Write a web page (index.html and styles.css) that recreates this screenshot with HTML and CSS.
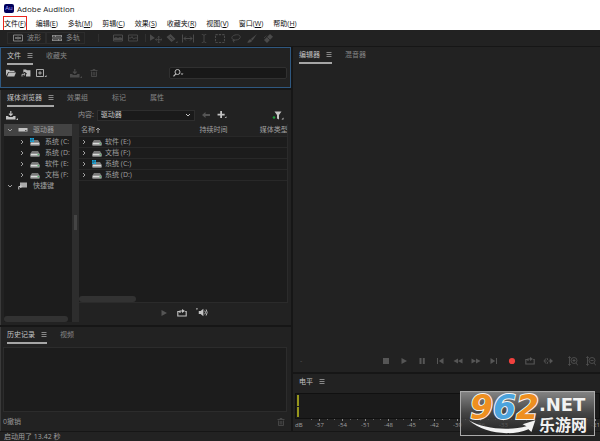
FILE: index.html
```html
<!DOCTYPE html>
<html lang="zh-CN">
<head>
<meta charset="utf-8">
<meta name="viewport" content="width=device-width, initial-scale=1">
<title>Adobe Audition</title>
<link rel="stylesheet" href="styles.css">
</head>
<body>
<svg class="sprite" aria-hidden="true">
  <symbol id="wave" viewBox="0 0 10 8"><path d="M.5 1h9v6h-9zM2 4h6M3 3v2M5 2.500v3M7 3v2" fill="none" stroke="currentColor" stroke-width=".9"/></symbol>
  <symbol id="multi" viewBox="0 0 10 8"><path d="M0 1h10v2.600H0zM0 4.400h10V7H0z" fill="currentColor"/><path d="M1 2.300h2M4 2.300h5M1 5.700h5M7 5.700h2" stroke="#222" stroke-width=".7"/></symbol>
  <symbol id="freq" viewBox="0 0 10 8"><path d="M.5 1h9v6h-9z" fill="none" stroke="currentColor"/><path d="M1 6V4l2-1 2 1 2-1 2 1v2z" fill="currentColor"/></symbol>
  <symbol id="pitch" viewBox="0 0 10 8"><path d="M.5 1h9v6h-9zM1 4h2l1-1.500L5.500 5 7 4h2" fill="none" stroke="currentColor" stroke-width=".9"/></symbol>
  <symbol id="move" viewBox="0 0 11 8"><path d="M0 0l4.500 3.500L0 6z" fill="currentColor"/><path d="M5 5h6M8 2v6M6 4L5 5l1 1M10 4l1 1-1 1M7 3l1-1 1 1M7 7l1 1 1-1" fill="none" stroke="currentColor" stroke-width=".8"/></symbol>
  <symbol id="razor" viewBox="0 0 11 9"><path d="M0 3l4-3 5 5-4 3z" fill="currentColor"/><path d="M3.500 2.800l2.800 2.800" stroke="#222" stroke-width=".8"/><path d="M11 7v2H9z" fill="currentColor"/></symbol>
  <symbol id="slip" viewBox="0 0 12 8"><path d="M.5 0v8M11.500 0v8M2 4h8M4 2L2 4l2 2M8 2l2 2-2 2" fill="none" stroke="currentColor"/></symbol>
  <symbol id="beam" viewBox="0 0 6 8"><path d="M1 .5h1l1 .7 1-.7h1M3 1v6M1 7.500h1l1-.7 1 .7h1" fill="none" stroke="currentColor" stroke-width=".8"/></symbol>
  <symbol id="marquee" viewBox="0 0 10 8"><path d="M1 .5h8v7H1z" fill="none" stroke="currentColor" stroke-dasharray="2 1"/></symbol>
  <symbol id="lasso" viewBox="0 0 10 9"><path d="M3 6C0 5 0 2 4 1s6 1 5 3-4 2-6 2c-2-1-1 2 1 0M2 6l1 2.500" fill="none" stroke="currentColor" stroke-width=".9"/></symbol>
  <symbol id="brush" viewBox="0 0 10 9"><path d="M10 0L5.500 6.500 3.800 5zM3.300 5.200l1.800 1.600C4 8.700 2 9 0 8.600c1.200-.8 1.500-3 3.300-3.400z" fill="currentColor"/></symbol>
  <symbol id="heal" viewBox="0 0 10 9"><path d="M7 0l3 2.700L4 9 1 6z" fill="currentColor"/><path d="M4.200 3.200L7 6" stroke="#222" stroke-width=".7"/><path d="M1 4l3-3" stroke="currentColor" stroke-dasharray="1"/></symbol>
  <symbol id="folder" viewBox="0 0 10 8"><path d="M0 7V.7h3l1 1h4.500V3H2.300z" fill="currentColor"/><path d="M2.800 3.600H10L8.300 7.500H1z" fill="currentColor"/></symbol>
  <symbol id="import" viewBox="0 0 10 9"><path d="M2 .5h3l1 1h4V8.500H5V6.500l1-1.500-2.500-2L2 4z" fill="currentColor"/><path d="M.5 8.500V6h3M2.500 4.500L4 6 2.500 7.500" fill="none" stroke="currentColor"/></symbol>
  <symbol id="newfile" viewBox="0 0 11 8"><path d="M.5.5h7v7h-7zM2.200 4h3.600M4 2.200v3.600" fill="none" stroke="currentColor" stroke-width=".9"/><path d="M10.500 6v2h-2z" fill="currentColor"/></symbol>
  <symbol id="insert" viewBox="0 0 12 9"><path d="M0 5h2l1 1h3.500l1-1h2v3.500H0z" fill="currentColor"/><path d="M4.800 0v3.500M3 2.700l1.800 1.800 1.800-1.800" fill="none" stroke="currentColor" stroke-width="1.200"/><path d="M12 7v2h-2z" fill="currentColor"/></symbol>
  <symbol id="trash" viewBox="0 0 7 8"><path d="M0 1.500h7M2.500 1V.5h2V1M1 2.500v5h5v-5M2.700 3v3.500M4.300 3v3.500" fill="none" stroke="currentColor" stroke-width=".9"/></symbol>
  <symbol id="search" viewBox="0 0 11 8"><circle cx="4.500" cy="3" r="2.500" fill="none" stroke="currentColor"/><path d="M2.800 4.800L.5 7.300" stroke="currentColor" stroke-width="1.200"/><path d="M7.500 4.500h3L9 6z" fill="currentColor"/></symbol>
  <symbol id="back" viewBox="0 0 8 6"><path d="M0 3l3.500-3v2H8v2H3.500v2z" fill="currentColor"/></symbol>
  <symbol id="plus" viewBox="0 0 10 9"><path d="M3 0h2v3h3v2H5v3H3V5H0V3h3zM10 6v2H8z" fill="currentColor"/></symbol>
  <symbol id="filter" viewBox="0 0 11 9"><path d="M2 .5h7L6.500 4v4.500l-2-1V4z" fill="currentColor"/><circle cx="1.500" cy="6.500" r="1.300" fill="#1d9b3a"/><path d="M11 6.500v2H9z" fill="currentColor"/></symbol>
  <symbol id="chevron" viewBox="0 0 6 6"><path d="M1 2l2 2 2-2" fill="none" stroke="currentColor"/></symbol>
  <symbol id="right" viewBox="0 0 6 6"><path d="M2 1l2 2-2 2" fill="none" stroke="currentColor"/></symbol>
  <symbol id="up" viewBox="0 0 5 6"><path d="M2.500 6V1M.5 3l2-2 2 2" fill="none" stroke="currentColor"/></symbol>
  <symbol id="disk" viewBox="0 0 10 8"><path d="M2 2h6l1.500 2.500h-9z" fill="#777"/><path d="M.5 4.500h9v3h-9z" fill="#dcdcdc"/><path d="M1 6.800h8" stroke="#555" stroke-width=".6"/><path d="M7.500 5.700H9" stroke="#2fa44a"/></symbol>
  <symbol id="sysdisk" viewBox="0 0 10 8"><path d="M2 2h6l1.500 2.500h-9z" fill="#777"/><path d="M.5 4.500h9v3h-9z" fill="#dcdcdc"/><path d="M1 6.800h8" stroke="#555" stroke-width=".6"/><path d="M0 0h1.800v1.800H0zM2.200 0H4v1.800H2.200zM0 2.200h1.800V4H0zM2.200 2.200H4V4H2.200z" fill="#16a5dc"/></symbol>
  <symbol id="drive" viewBox="0 0 10 6"><path d="M.5 1h9v3.500h-9z" fill="#c4c4c4"/><path d="M7 3.500h1.500" stroke="#555"/></symbol>
  <symbol id="shortcut" viewBox="0 0 10 8"><path d="M2 .5h7v5H2z" fill="#aaa"/><path d="M.8 7.500V4.500h2.500M2.300 3l1.500 1.500L2.300 6" fill="none" stroke="#ccc"/></symbol>
  <symbol id="play" viewBox="0 0 8 8"><path d="M1.500 1l5.500 3-5.500 3z" fill="currentColor"/></symbol>
  <symbol id="stop" viewBox="0 0 8 8"><path d="M1 1h6v6H1z" fill="currentColor"/></symbol>
  <symbol id="pause" viewBox="0 0 8 8"><path d="M1.500 1h2v6h-2zM4.800 1h2v6h-2z" fill="currentColor"/></symbol>
  <symbol id="first" viewBox="0 0 8 8"><path d="M1 1h1v6H1zM7.500 1v6L2.800 4z" fill="currentColor"/></symbol>
  <symbol id="last" viewBox="0 0 8 8"><path d="M6 1h1v6H6zM.5 1v6l4.700-3z" fill="currentColor"/></symbol>
  <symbol id="rew" viewBox="0 0 10 8"><path d="M5 1.500v5L.5 4zM9.500 1.500v5L5 4z" fill="currentColor"/></symbol>
  <symbol id="ffw" viewBox="0 0 10 8"><path d="M.5 1.500v5L5 4zM5 1.500v5L9.500 4z" fill="currentColor"/></symbol>
  <symbol id="rec" viewBox="0 0 8 8"><circle cx="4" cy="4" r="3.100" fill="#f0413e"/></symbol>
  <symbol id="loop" viewBox="0 0 10 8"><path d="M2.500 2.500H.8V7h8.400V2.500H8.200M3 4V2h3" fill="none" stroke="currentColor" stroke-width="1.100"/><path d="M5 0l3 2-3 2z" fill="currentColor"/></symbol>
  <symbol id="skip" viewBox="0 0 11 8"><path d="M3.500 1L1 4l2.500 3M2 4h2M5 1v2M5 5v2M6 4h3" fill="none" stroke="currentColor"/><path d="M7.500 1L11 4 7.500 7z" fill="currentColor"/></symbol>
  <symbol id="speaker" viewBox="0 0 13 9"><path d="M3 3h2l3-2.500v8L5 6H3z" fill="currentColor"/><path d="M9.500 2.500q1.500 2 0 4M11 1.200q2.200 3.300 0 6.600" fill="none" stroke="currentColor"/><path d="M0 0h2L1 2z" fill="currentColor"/></symbol>
  <symbol id="zin" viewBox="0 0 10 10"><path d="M1.500 1v8M.3 2l1.200-1.500L2.700 2M.3 8l1.200 1.500L2.700 8M8 7l2 2.500M4.500 4.500h3M6 3v3" fill="none" stroke="currentColor" stroke-width=".8"/><circle cx="6" cy="4.500" r="3" fill="none" stroke="currentColor" stroke-width=".8"/></symbol>
  <symbol id="zout" viewBox="0 0 10 10"><path d="M1.500 1v8M.3 2l1.200-1.500L2.700 2M.3 8l1.200 1.500L2.700 8M8 7l2 2.500M4.500 4.500h3" fill="none" stroke="currentColor" stroke-width=".8"/><circle cx="6" cy="4.500" r="3" fill="none" stroke="currentColor" stroke-width=".8"/></symbol>
  <symbol id="list" viewBox="0 0 6 6"><path d="M.5.5h5M.5 2.500h5M.5 4.500h5" stroke="currentColor"/></symbol>
</svg>

<div class="app">
  <header class="titlebar"><span class="logo">Au</span><h1>Adobe Audition</h1></header>
  <nav class="menubar" aria-label="菜单">
    <button class="marked">文件(<u>F</u>)</button><button>编辑(<u>E</u>)</button><button>多轨(<u>M</u>)</button><button>剪辑(<u>C</u>)</button><button>效果(<u>S</u>)</button><button>收藏夹(<u>R</u>)</button><button>视图(<u>V</u>)</button><button>窗口(<u>W</u>)</button><button>帮助(<u>H</u>)</button>
  </nav>
  <div class="toolbar">
    <button class="mode"><svg class="i10"><use href="#wave"/></svg>波形</button>
    <button class="mode"><svg class="i10"><use href="#multi"/></svg>多轨</button>
    <div class="views">
      <button aria-label="频谱"><svg class="i10"><use href="#freq"/></svg></button>
      <button aria-label="音高"><svg class="i10"><use href="#pitch"/></svg></button>
    </div>
    <div class="tools">
      <button aria-label="移动"><svg class="i12"><use href="#move"/></svg></button>
      <button aria-label="切割"><svg class="i12"><use href="#razor"/></svg></button>
      <button aria-label="滑动"><svg class="i12"><use href="#slip"/></svg></button>
      <button aria-label="时间选择"><svg class="i12"><use href="#beam"/></svg></button>
      <button aria-label="框选"><svg class="i12"><use href="#marquee"/></svg></button>
      <button aria-label="套索"><svg class="i12"><use href="#lasso"/></svg></button>
      <button aria-label="画笔"><svg class="i12"><use href="#brush"/></svg></button>
      <button aria-label="修复"><svg class="i12"><use href="#heal"/></svg></button>
    </div>
  </div>

  <main class="workspace">
    <div class="column">
      <section class="panel files">
        <div class="tabs"><button class="tab active">文件<svg class="i6"><use href="#list"/></svg></button><button class="tab">收藏夹</button></div>
        <div class="filebar">
          <button aria-label="打开"><svg class="i10"><use href="#folder"/></svg></button>
          <button aria-label="导入"><svg class="i10"><use href="#import"/></svg></button>
          <button aria-label="新建"><svg class="i11"><use href="#newfile"/></svg></button>
          <div class="pair">
            <button aria-label="插入" disabled><svg class="i12"><use href="#insert"/></svg></button>
            <button aria-label="删除" disabled><svg class="i8"><use href="#trash"/></svg></button>
          </div>
          <label class="search"><svg class="i11"><use href="#search"/></svg><input type="search" aria-label="搜索"></label>
        </div>
      </section>

      <section class="panel browser">
        <div class="tabs wide"><button class="tab active">媒体浏览器<svg class="i6"><use href="#list"/></svg></button><button class="tab">效果组</button><button class="tab">标记</button><button class="tab">属性</button></div>
        <div class="browsebar">
          <button aria-label="导入文件"><svg class="i12"><use href="#insert"/></svg></button>
          <label class="content" for="source">内容:</label>
          <span class="picker"><select id="source"><option>驱动器</option></select><svg class="i6"><use href="#chevron"/></svg></span>
          <button class="dim" aria-label="后退"><svg class="i8"><use href="#back"/></svg></button>
          <button class="add" aria-label="添加"><svg class="i10"><use href="#plus"/></svg></button>
          <button class="filter" aria-label="筛选"><svg class="i12"><use href="#filter"/></svg></button>
        </div>
        <div class="split">
          <div class="tree">
            <ul>
              <li class="root selected"><svg class="i6"><use href="#chevron"/></svg><svg class="i10"><use href="#drive"/></svg>驱动器</li>
              <li><svg class="i6"><use href="#right"/></svg><svg class="i10"><use href="#sysdisk"/></svg>系统 (C:</li>
              <li><svg class="i6"><use href="#right"/></svg><svg class="i10"><use href="#disk"/></svg>系统 (D:</li>
              <li><svg class="i6"><use href="#right"/></svg><svg class="i10"><use href="#disk"/></svg>软件 (E:</li>
              <li><svg class="i6"><use href="#right"/></svg><svg class="i10"><use href="#disk"/></svg>文档 (F:</li>
              <li class="root"><svg class="i6"><use href="#chevron"/></svg><svg class="i10"><use href="#shortcut"/></svg>快捷键</li>
            </ul>
            <div class="thumb"></div>
          </div>
          <div class="divider"><span></span></div>
          <div class="listing">
            <div class="listbody">
              <table>
                <thead><tr><th class="name">名称<svg class="i6"><use href="#up"/></svg></th><th class="time">持续时间</th><th>媒体类型</th></tr></thead>
                <tbody>
                  <tr><td colspan="3"><div class="entry"><svg class="i6"><use href="#right"/></svg><svg class="i10"><use href="#disk"/></svg>软件 (E:)</div></td></tr>
                  <tr><td colspan="3"><div class="entry"><svg class="i6"><use href="#right"/></svg><svg class="i10"><use href="#disk"/></svg>文档 (F:)</div></td></tr>
                  <tr><td colspan="3"><div class="entry"><svg class="i6"><use href="#right"/></svg><svg class="i10"><use href="#sysdisk"/></svg>系统 (C:)</div></td></tr>
                  <tr><td colspan="3"><div class="entry"><svg class="i6"><use href="#right"/></svg><svg class="i10"><use href="#disk"/></svg>系统 (D:)</div></td></tr>
                </tbody>
              </table>
              <div class="thumb"></div>
            </div>
            <div class="preview">
              <button class="dim" aria-label="播放"><svg class="i8"><use href="#play"/></svg></button>
              <button aria-label="循环"><svg class="i10"><use href="#loop"/></svg></button>
              <button aria-label="自动播放"><svg class="i12"><use href="#speaker"/></svg></button>
            </div>
          </div>
        </div>
      </section>

      <section class="panel history">
        <div class="tabs"><button class="tab active">历史记录<svg class="i6"><use href="#list"/></svg></button><button class="tab">视频</button></div>
        <div class="log"></div>
        <div class="undo"><span>0撤销</span><button aria-label="删除记录" disabled><svg class="i8"><use href="#trash"/></svg></button></div>
      </section>
    </div>

    <div class="column">
      <section class="panel editor">
        <div class="tabs"><button class="tab active">编辑器<svg class="i6"><use href="#list"/></svg></button><button class="tab">混音器</button></div>
        <div class="transport">
          <span class="clock">-</span>
          <button aria-label="停止"><svg class="i8"><use href="#stop"/></svg></button>
          <button aria-label="播放"><svg class="i8"><use href="#play"/></svg></button>
          <button aria-label="暂停"><svg class="i8"><use href="#pause"/></svg></button>
          <button aria-label="到开头"><svg class="i8"><use href="#first"/></svg></button>
          <button aria-label="快退"><svg class="i10"><use href="#rew"/></svg></button>
          <button aria-label="快进"><svg class="i10"><use href="#ffw"/></svg></button>
          <button aria-label="到结尾"><svg class="i8"><use href="#last"/></svg></button>
          <button aria-label="录制"><svg class="i8"><use href="#rec"/></svg></button>
          <button aria-label="循环播放"><svg class="i10"><use href="#loop"/></svg></button>
          <button aria-label="跳过选区"><svg class="i10"><use href="#skip"/></svg></button>
          <button class="zoom" aria-label="放大"><svg class="square"><use href="#zin"/></svg></button>
          <button aria-label="缩小"><svg class="square"><use href="#zout"/></svg></button>
        </div>
      </section>
      <section class="panel levels">
        <div class="tabs"><button class="tab plain">电平<svg class="i6"><use href="#list"/></svg></button></div>
        <div class="meter"><i></i><i></i></div>
        <div class="scale"><span>dB</span><span>-57</span><span>-54</span><span>-51</span><span>-48</span><span>-45</span><span>-42</span><span>-39</span><span>-36</span><span>-33</span><span>-30</span><span>-27</span><span>-24</span><span>-21</span></div>
      </section>
    </div>
  </main>
  <footer class="status">启动用了 13.42 秒</footer>

  <div class="badge">
    <svg class="swoosh" viewBox="0 0 134 44" aria-hidden="true"><path d="M7 29C22 38 48 40 66 35l-4-2 13-4-4 12-3-3C48 46 22 42 7 29z" fill="#f2f2f2"/></svg>
    <div class="digits"><b>9</b><b class="blue">6</b><b>2</b></div>
    <div class="site"><span class="net">.NET</span><span class="cn">乐游网</span></div>
  </div>
</div>
</body>
</html>
```
FILE: styles.css
```css
* { box-sizing: border-box; }
body {
  margin: 0;
  background: #161616;
  color: #a0a0a0;
  font: 7px/10px "Open Sans", "Noto Sans CJK SC", sans-serif;
}
button, input, select {
  margin: 0;
  padding: 0;
  border: 0;
  background: none;
  color: inherit;
  font: inherit;
}
button { display: flex; align-items: center; white-space: nowrap; }
svg { display: block; flex: none; height: 8px; }
.sprite { position: absolute; width: 0; height: 0; }
.i6 { width: 6px; height: 6px; }
.i8 { width: 8px; }
.i10 { width: 10px; }
.i11 { width: 11px; }
.i12 { width: 12px; height: 9px; }
.square { width: 10px; height: 10px; }

.app { position: relative; display: flex; flex-direction: column; min-height: 100vh; overflow: hidden; }

.titlebar { display: flex; align-items: center; gap: 3px; height: 17px; padding: 0 4px; background: #fff; color: #222; }
.titlebar h1 { margin: 0; font-size: 8px; font-weight: 400; }
.logo { width: 10px; height: 9px; border-radius: 2px; background: #00005b; color: #b0b0ff; font-size: 6px; line-height: 9px; text-align: center; }

.menubar { display: flex; gap: 10px; height: 13px; padding: 0 4px; background: #fff; color: #111; }
.menubar u { text-underline-offset: 1px; text-decoration-thickness: 1px; }
.menubar button { height: 13px; }
.marked { outline: 1px solid #e8251c; outline-offset: 0; }

.toolbar { display: flex; align-items: center; height: 16px; padding: 0 7px; background: #222; color: #8c8c8c; }
.mode { gap: 4px; height: 12px; padding: 0 4px 0 5px; border: 1px solid #2c2c2c; }
.views, .tools { display: flex; color: #4a4a4a; }
.views { gap: 5px; margin-left: 13px; padding: 0 7px 0 14px; border-left: 1px solid #303030; border-right: 1px solid #303030; }
.tools { gap: 4px; padding-left: 4px; }

.workspace { display: grid; grid-template-columns: 291fr 307fr; gap: 2px; flex: 1; padding-top: 1px; }
.column { display: flex; flex-direction: column; gap: 2px; min-width: 0; }
.panel { background: #222; min-width: 0; }

.tabs { display: flex; gap: 13px; padding: 1px 6px 0; }
.tab { gap: 6px; height: 16px; color: #868686; border-bottom: 2px solid transparent; }
.tab.active { color: #c4c4c4; border-color: #a6a6a6; }
.tab svg { color: #888; }
.tab.plain { color: #c4c4c4; }
.wide .tab + .tab { margin-right: 11px; }

.files { height: 41px; border: 1px solid #2f5880; }
.filebar { display: flex; align-items: center; gap: 5px; padding: 2px 3px 0 5px; color: #bdbdbd; }
.pair { display: flex; gap: 8px; margin-left: 18px; color: #4a4a4a; }
.search { display: flex; align-items: center; flex: 0 1 118px; height: 12px; margin-left: auto; padding: 0 3px; border: 1px solid #303030; border-radius: 2px; background: #181818; }
.search input { min-width: 0; flex: 1; }

.browser { display: flex; flex-direction: column; flex: 1; border-left: 1px solid #3a3a3a; }
.browsebar { display: flex; align-items: center; height: 16px; padding: 0 7px 0 5px; color: #c4c4c4; }
.content { margin-left: 60px; color: #949494; }
.picker { display: flex; align-items: center; flex: 0 1 98px; height: 11px; margin: 0 7px 0 3px; padding: 0 3px; border: 1px solid #2e2e2e; background: #1a1a1a; }
.picker select { flex: 1; appearance: none; color: #c8c8c8; }
.dim { color: #555; }
.add { margin-left: 7px; }
.filter { margin-left: auto; }

.split { display: flex; flex: 1; padding: 1px 3px 3px; }
.tree { display: flex; flex-direction: column; flex: 0 0 68px; overflow: hidden; background: #1c1c1c; }
.tree ul { flex: 1; margin: 0; padding: 0; list-style: none; }
.tree li { display: flex; align-items: center; gap: 5px; height: 11px; padding-left: 15px; overflow: hidden; white-space: nowrap; }
.tree .root { height: 12px; padding-left: 3px; }
.tree .selected { background: #434343; }
.thumb { width: 64px; height: 6px; border-radius: 3px; background: #323232; }
.divider { display: flex; flex: 0 0 6px; background: #2d2d2d; }
.divider span { width: 3px; height: 15px; margin: 91px 2px 0; background: #444; }
.listing { display: flex; flex-direction: column; flex: 1; min-width: 0; }
.listbody { display: flex; flex-direction: column; justify-content: space-between; flex: 1; overflow: hidden; background: #1c1c1c; border: solid #2b2b2b; border-width: 0 1px 1px 0; }
.listbody .thumb { width: 57px; }
table { width: 100%; border-collapse: collapse; table-layout: fixed; }
th { height: 12px; padding: 0 0 0 2px; background: #222; font-weight: 400; text-align: left; white-space: nowrap; overflow: hidden; }
th svg { display: inline-block; vertical-align: -1px; }
.name { width: 57%; }
.time { width: 29%; }
td { height: 11px; padding: 0 0 0 2px; border: solid #282828; border-width: 1px 0; }
.entry { display: flex; align-items: center; gap: 5px; height: 10px; }
.entry .i10 { margin: 0 -2px 0 0; }
.preview { display: flex; align-items: center; justify-content: center; gap: 9px; height: 19px; color: #c4c4c4; }

.history { display: flex; flex-direction: column; height: 104px; border-left: 1px solid #3a3a3a; }
.log { flex: 1; margin: 3px 4px 0 2px; border: 1px solid #2c2c2c; background: #1c1c1c; }
.undo { display: flex; align-items: center; justify-content: space-between; height: 19px; padding: 0 6px 0 2px; color: #949494; }
.undo button { color: #4a4a4a; }

.editor { display: flex; flex-direction: column; justify-content: space-between; flex: 1; }
.transport { display: flex; align-items: center; gap: 8px; height: 23px; padding: 0 4px 0 7px; color: #565656; }
.transport button { justify-content: center; width: 10px; }
.clock { margin-right: auto; }
.transport .zoom { margin-left: 7px; }

.levels { height: 57px; overflow: hidden; }
.meter { display: grid; gap: 1px; height: 26px; margin: 2px 0 0 2px; padding: 1px; border: 1px solid #101010; background: #1b1b1b; }
.meter i { width: 2px; background: #96961c; }
.scale { display: flex; padding-left: 2px; font-size: 6px; line-height: 8px; }
.scale span { flex: 0 0 23px; padding-top: 2px; text-align: center; background: linear-gradient(#888, #888) 11px 0 / 1px 2px no-repeat, linear-gradient(#666, #666) 3px 0 / 1px 1px no-repeat, linear-gradient(#666, #666) 19px 0 / 1px 1px no-repeat; }
.scale span:first-child { flex-basis: 13px; text-align: left; background: none; }

.status { height: 9px; padding-left: 4px; background: #222; line-height: 9px; margin-top: 1px; }

.badge { position: absolute; right: 5px; bottom: 5px; display: flex; width: 135px; height: 45px; border: 1px solid #aaa; background: linear-gradient(rgba(150, 150, 150, .85), rgba(80, 80, 80, .75) 50%, rgba(35, 35, 35, .7)); color: #f2f2f2; font-family: "DejaVu Sans", sans-serif; font-weight: 700; }
.swoosh { position: absolute; inset: 0; width: 100%; height: 100%; }
.digits { display: flex; position: relative; padding-left: 9px; font-size: 33px; font-style: italic; line-height: 31px; }
.digits b { color: #ee8f20; -webkit-text-stroke: 2px #f4f4f4; paint-order: stroke fill; }
.digits .blue { color: #4ba3dc; }
.site { display: flex; flex-direction: column; position: relative; }
.net { font-size: 18px; line-height: 18px; padding-top: 4px; }
.cn { font: 700 16px/20px "Noto Sans CJK SC", sans-serif; }
```
